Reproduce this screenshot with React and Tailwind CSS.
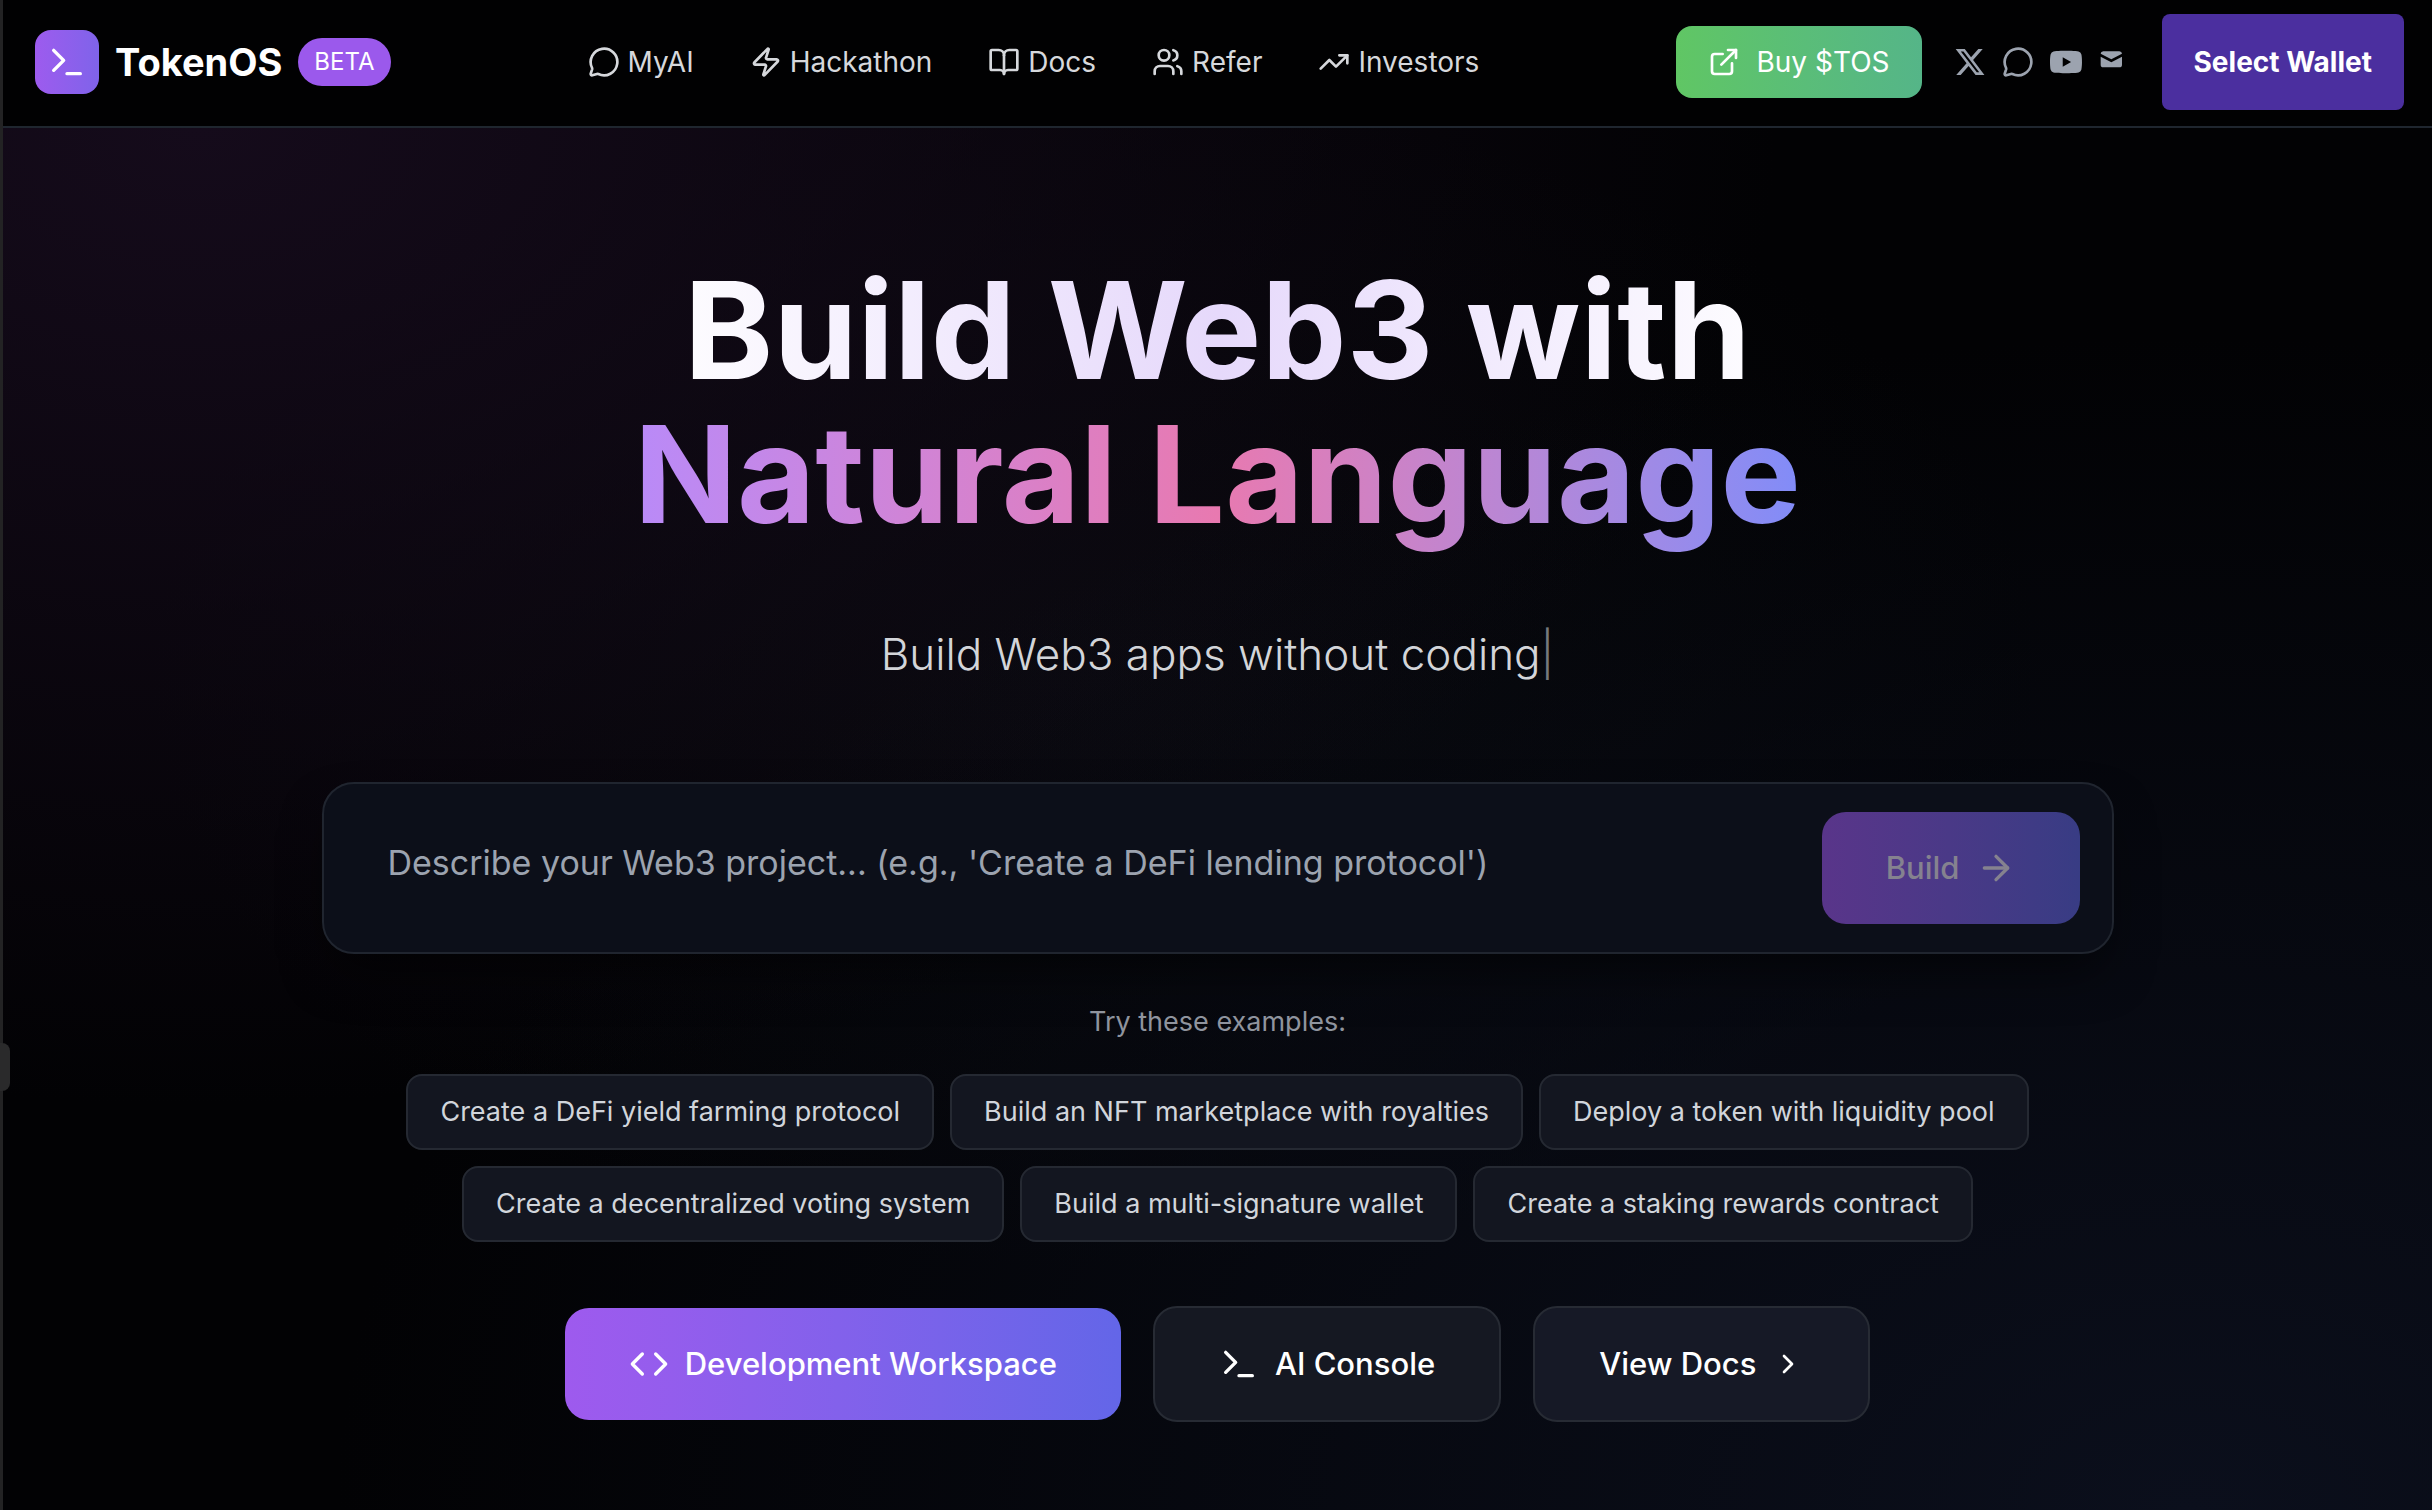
import React from 'react';
import {
  ArrowRight,
  BookOpen,
  ChevronRight,
  Code,
  ExternalLink,
  MessageCircle,
  Terminal,
  TrendingUp,
  Users,
  Zap,
} from 'lucide-react';

const NAV_ITEMS = [
  { label: 'MyAI', icon: MessageCircle },
  { label: 'Hackathon', icon: Zap },
  { label: 'Docs', icon: BookOpen },
  { label: 'Refer', icon: Users },
  { label: 'Investors', icon: TrendingUp },
];

const EXAMPLES = [
  'Create a DeFi yield farming protocol',
  'Build an NFT marketplace with royalties',
  'Deploy a token with liquidity pool',
  'Create a decentralized voting system',
  'Build a multi-signature wallet',
  'Create a staking rewards contract',
];

function SocialLinks() {
  return (
    <div className="mx-8 flex items-center gap-4 text-[#9ca3af]">
      <a href="#x" aria-label="X">
        <svg viewBox="0 0 24 24" fill="currentColor" className="size-8">
          <path d="M18.244 2.25h3.308l-7.227 8.26 8.502 11.24H16.17l-5.214-6.817L4.99 21.75H1.68l7.73-8.835L1.254 2.25H8.08l4.713 6.231zm-1.161 17.52h1.833L7.084 4.126H5.117z" />
        </svg>
      </a>
      <a href="#chat" aria-label="Chat">
        <MessageCircle className="size-8" />
      </a>
      <a href="#youtube" aria-label="YouTube">
        <svg viewBox="0 0 24 24" fill="currentColor" className="size-8">
          <path d="M23.498 6.186a3.016 3.016 0 0 0-2.122-2.136C19.505 3.545 12 3.545 12 3.545s-7.505 0-9.377.505A3.017 3.017 0 0 0 .502 6.186C0 8.070 0 12 0 12s0 3.930.502 5.814a3.016 3.016 0 0 0 2.122 2.136c1.871.505 9.376.505 9.376.505s7.505 0 9.377-.505a3.015 3.015 0 0 0 2.122-2.136C24 15.930 24 12 24 12s0-3.930-.502-5.814zM9.545 15.568V8.432L15.818 12l-6.273 3.568z" />
        </svg>
      </a>
      <a href="#mail" aria-label="Mail">
        <svg viewBox="0 0 24 24" fill="currentColor" className="size-8">
          <path d="M2.003 5.884L10 9.882l7.997-3.998A2 2 0 0 0 16 4H4a2 2 0 0 0-1.997 1.884z" />
          <path d="M18 8.118l-8 4-8-4V14a2 2 0 0 0 2 2h12a2 2 0 0 0 2-2V8.118z" />
        </svg>
      </a>
    </div>
  );
}

function Header() {
  return (
    <header className="flex h-32 items-center justify-between border-b-2 border-[#1f262f] bg-[#010102] pb-0.5 pl-8 pr-7">
      <a href="#home" className="flex items-center">
        <span className="flex size-16 items-center justify-center rounded-2xl bg-linear-to-r from-[#9d5bee] to-[#7f63ea]">
          <Terminal className="size-10 text-white" />
        </span>
        <span className="ml-4 text-[38px] font-bold text-white">TokenOS</span>
        <span className="ml-4 rounded-full bg-[#9b59ec] px-4 py-2 text-2xl text-white">BETA</span>
      </a>
      <nav className="flex items-center gap-14">
        {NAV_ITEMS.map(({ label, icon: Icon }) => (
          <a key={label} href={`#${label.toLowerCase()}`} className="flex items-center gap-2 text-[28px] text-[#d6d8dc]">
            <Icon className="size-8" />
            {label}
          </a>
        ))}
      </nav>
      <div className="flex items-center">
        <button type="button" className="flex h-18 items-center gap-4 rounded-2xl bg-linear-to-r from-[#60c664] to-[#55b588] px-8 text-[28px] text-white">
          <ExternalLink className="size-8" />
          Buy $TOS
        </button>
        <SocialLinks />
        <button type="button" className="h-24 rounded-lg bg-[#4b2f9f] px-8 text-[28px] font-bold text-white">
          Select Wallet
        </button>
      </div>
    </header>
  );
}

function Prompt() {
  return (
    <form className="flex w-full max-w-[1792px] items-center rounded-[32px] border-2 border-[#20252f] bg-[#0c0f19] py-7 pl-16 pr-8 shadow-2xl shadow-black/60">
      <input
        type="text"
        aria-label="Describe your Web3 project"
        placeholder="Describe your Web3 project... (e.g., 'Create a DeFi lending protocol')"
        className="min-w-0 flex-1 bg-transparent pb-3 text-[34px] text-white outline-none placeholder:text-[#9ca3af]"
      />
      <button type="submit" className="flex h-28 items-center gap-4 rounded-3xl bg-linear-to-r from-[#59358a] to-[#383c84] px-16 text-[31px] font-medium text-[#85828f]">
        Build
        <ArrowRight className="size-10" />
      </button>
    </form>
  );
}

export default function App() {
  return (
    <div className="relative flex min-h-screen flex-col border-l-3 border-[#232324] bg-[#020204] font-['Inter',sans-serif]">
      <Header />
      {/* sidebar handle */}
      <div className="absolute left-[-3px] top-[1043px] h-12 w-[10px] rounded-r-lg bg-[#2a2a2b]" />
      <main className="flex flex-1 flex-col items-center bg-[radial-gradient(ellipse_at_8%_0%,#150b1b_0%,transparent_50%),radial-gradient(ellipse_at_90%_100%,#0b0f1c_0%,transparent_60%),radial-gradient(ellipse_at_45%_40%,#08090d_0%,transparent_50%)] px-8 pb-20 pt-[130px]">
        <h1 className="text-center text-[135px] font-bold leading-36">
          <span className="block bg-linear-to-r from-white via-[#e6d9fb] to-white bg-clip-text text-transparent">Build Web3 with</span>
          <span className="block bg-linear-to-r from-[#b98af8] via-[#e879b0] to-[#818cf8] bg-clip-text pb-4 text-transparent">Natural Language</span>
        </h1>
        <p className="mt-15 text-[44px] font-light leading-16 text-[#d3d5d9]">
          Build Web3 apps without coding<span className="text-[#77797d]">|</span>
        </p>
        <div className="mt-24 flex w-full justify-center">
          <Prompt />
        </div>
        <p className="mt-12 text-[27px] leading-10 text-[#8f949e]">Try these examples:</p>
        <div className="mt-8 flex max-w-[1792px] flex-wrap justify-center gap-4">
          {EXAMPLES.map((example) => (
            <button key={example} type="button" className="h-19 rounded-2xl border-2 border-[#252932] bg-[#131620] px-8 text-[27px] text-[#d1d5db]">
              {example}
            </button>
          ))}
        </div>
        <div className="mt-16 flex items-center gap-8 text-[31px] font-medium text-white">
          <button type="button" className="flex h-28 items-center gap-4 rounded-3xl bg-linear-to-r from-[#9e5aee] to-[#6366e8] px-16">
            <Code className="size-10" />
            Development Workspace
          </button>
          <button type="button" className="flex h-29 items-center gap-4 rounded-3xl border-2 border-[#272b34] bg-[#151822] px-16">
            <Terminal className="size-10" />
            AI Console
          </button>
          <button type="button" className="flex h-29 items-center gap-4 rounded-3xl border-2 border-[#272b34] bg-[#161926] px-16">
            View Docs
            <ChevronRight className="size-8" />
          </button>
        </div>
      </main>
    </div>
  );
}
